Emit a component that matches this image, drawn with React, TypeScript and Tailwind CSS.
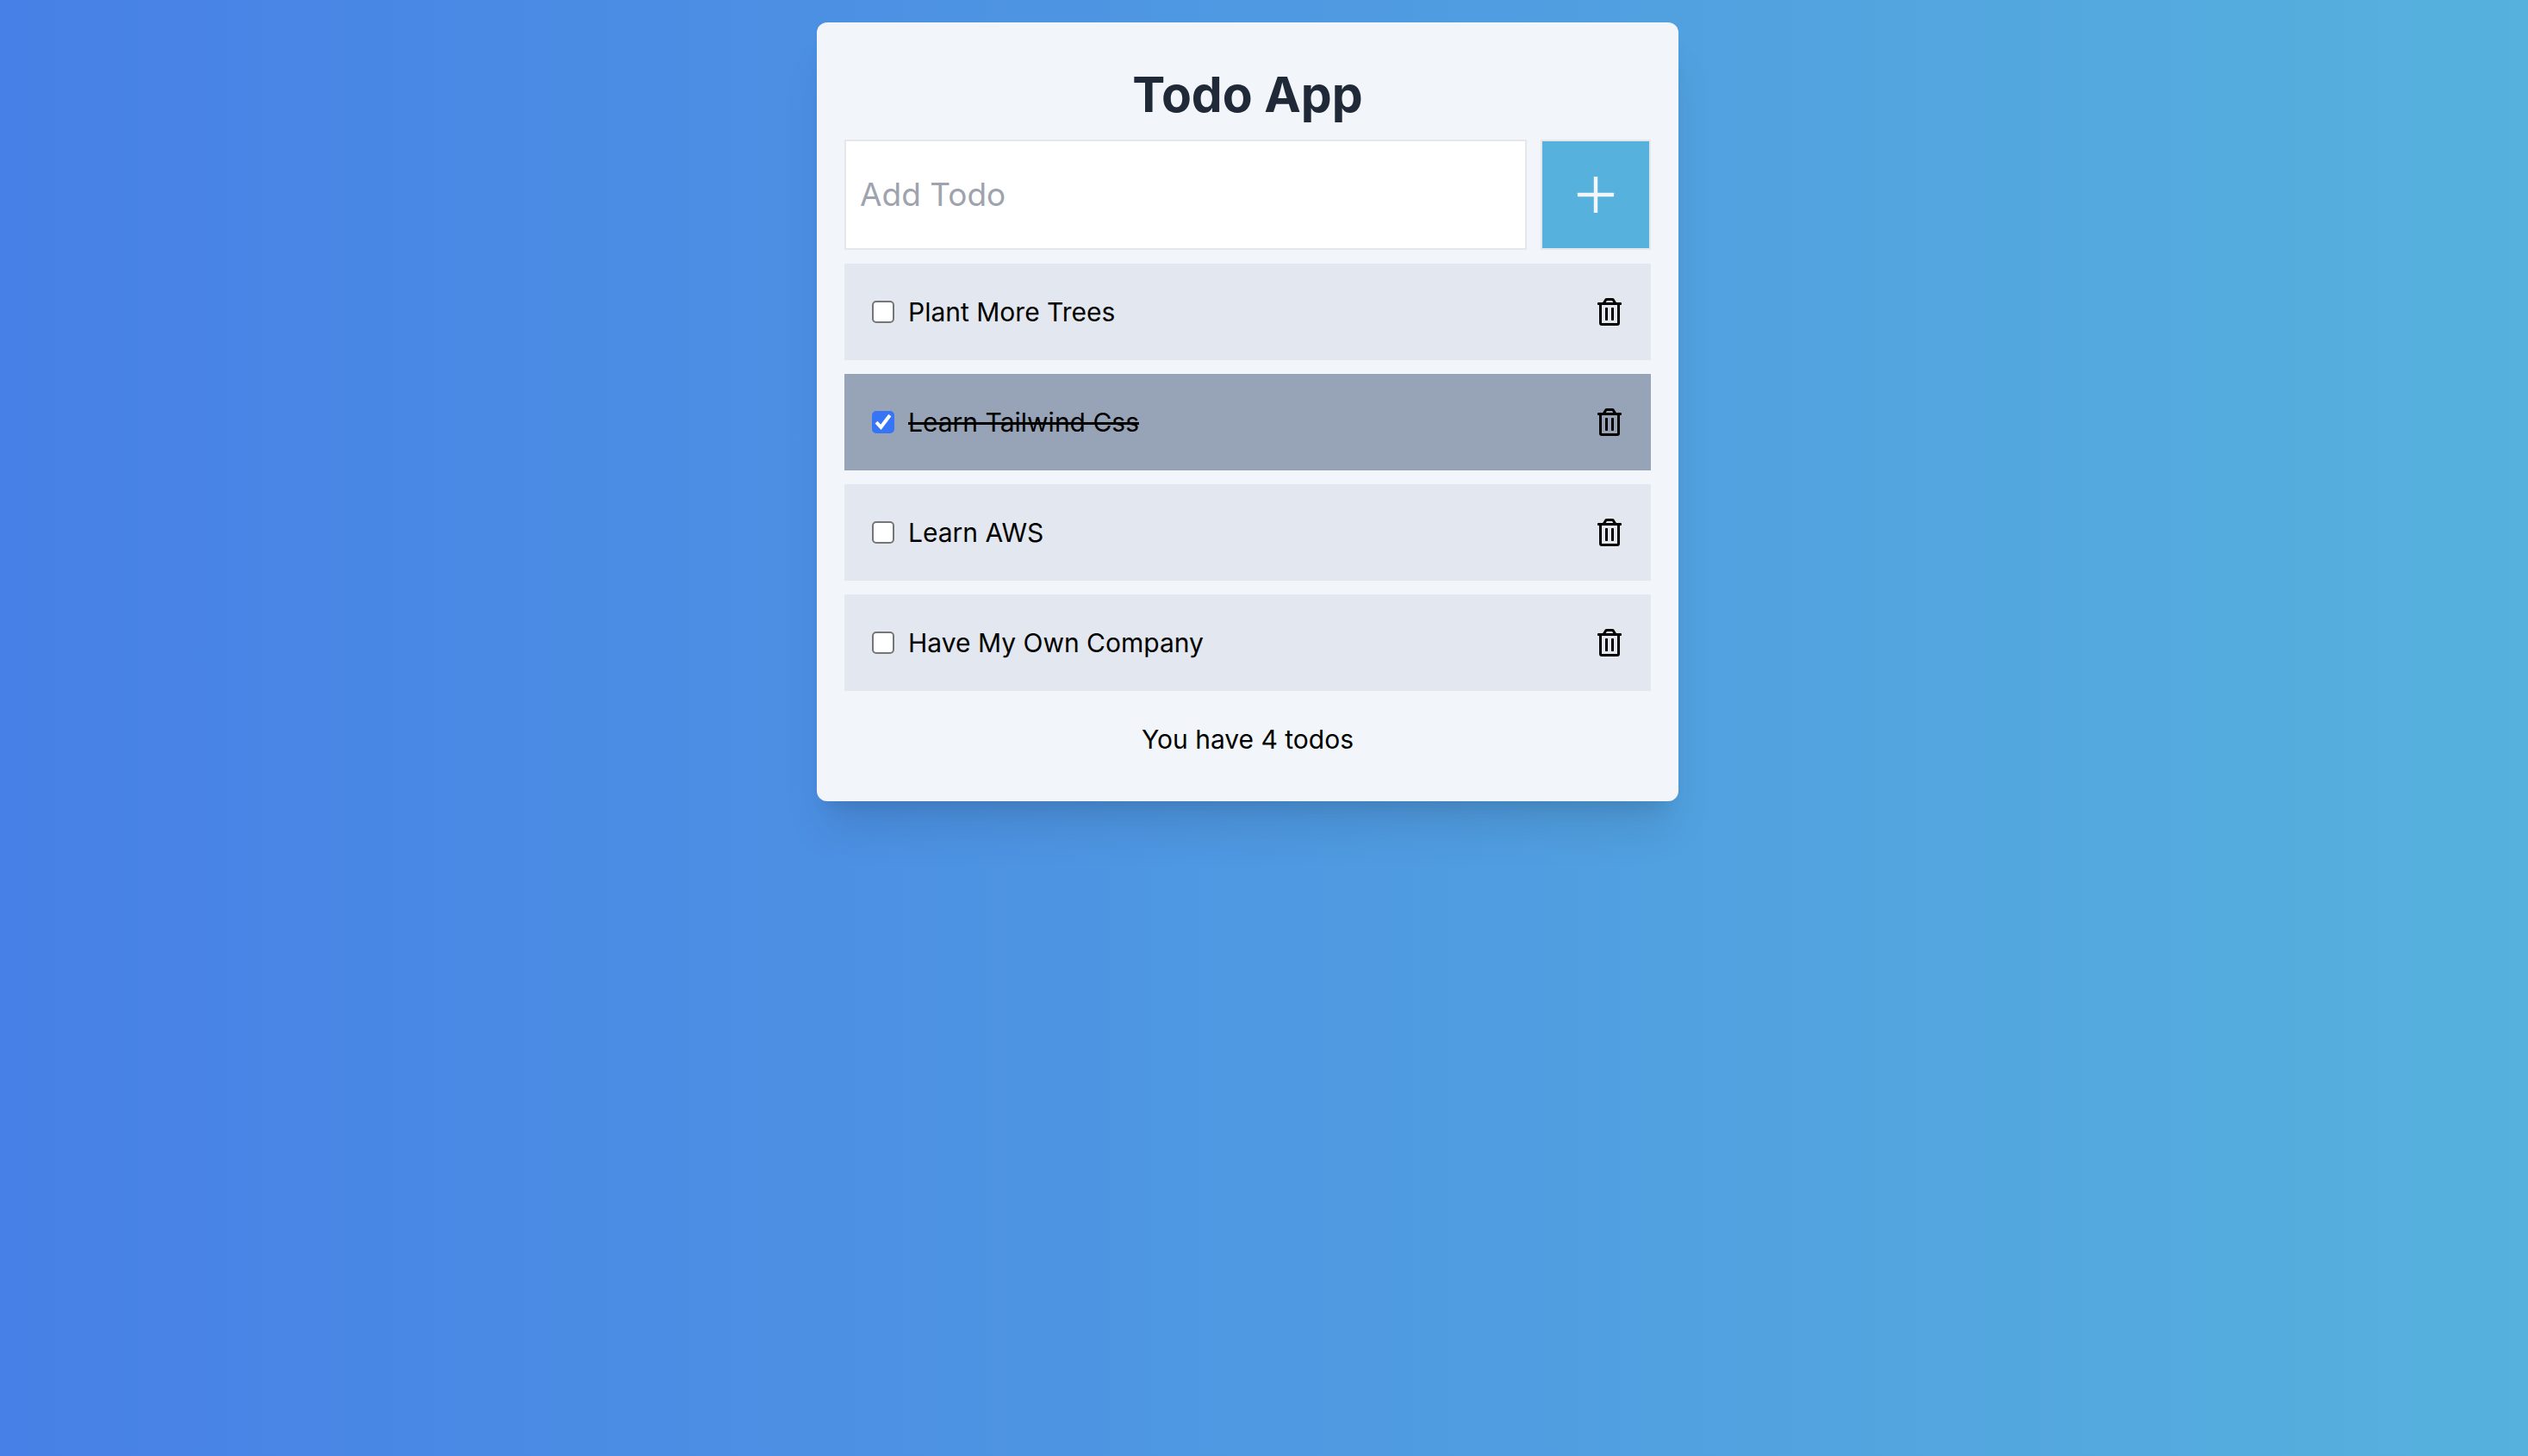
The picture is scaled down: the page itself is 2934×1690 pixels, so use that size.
import { useState } from "react";
import type { FormEvent } from "react";
import { AiOutlinePlus } from "react-icons/ai";
import { FaRegTrashAlt } from "react-icons/fa";

type Todo = { id: number; text: string; completed: boolean };

const initialTodos: Todo[] = [
  { id: 1, text: "Plant More Trees", completed: false },
  { id: 2, text: "Learn Tailwind Css", completed: true },
  { id: 3, text: "Learn AWS", completed: false },
  { id: 4, text: "Have My Own Company", completed: false },
];

type ItemProps = { todo: Todo; onToggle: () => void; onDelete: () => void };

function TodoItem({ todo, onToggle, onDelete }: ItemProps) {
  return (
    <li
      className={
        todo.completed
          ? "my-4 flex items-center justify-between bg-[#97a3b6] p-8"
          : "my-4 flex items-center justify-between bg-[#e3e7ef] p-8"
      }
    >
      <label className="flex cursor-pointer items-center gap-4">
        <span className="grid size-[26px]">
          <input
            type="checkbox"
            checked={todo.completed}
            onChange={onToggle}
            className="peer col-start-1 row-start-1 size-[26px] appearance-none rounded-[5px] border-2 border-[#767676] bg-white checked:border-[#3575f6] checked:bg-[#3575f6]"
          />
          <svg
            viewBox="0 0 26 26"
            fill="none"
            aria-hidden="true"
            className="pointer-events-none invisible col-start-1 row-start-1 size-[26px] stroke-white stroke-[4px] peer-checked:visible"
          >
            <path d="M5 13.2 L10.4 18.8 L20.8 5" />
          </svg>
        </span>
        <span className={todo.completed ? "line-through" : ""}>{todo.text}</span>
      </label>
      <button type="button" aria-label={`Delete ${todo.text}`} onClick={onDelete} className="cursor-pointer">
        <FaRegTrashAlt size={32} />
      </button>
    </li>
  );
}

export default function App() {
  const [todos, setTodos] = useState<Todo[]>(initialTodos);
  const [text, setText] = useState("");

  const addTodo = (e: FormEvent) => {
    e.preventDefault();
    if (!text.trim()) return;
    setTodos([...todos, { id: Date.now(), text, completed: false }]);
    setText("");
  };

  return (
    <div className="min-h-screen bg-linear-to-r/srgb from-[#4780e6] to-[#56b1dd] pt-[26px] pr-[70px] pb-8 pl-8 font-['Inter',sans-serif] text-[30px] leading-[48px] text-black">
      <main className="mx-auto w-full max-w-[1000px] rounded-xl bg-[#f2f5fa] p-8 shadow-[0_40px_50px_-10px_rgba(0,0,0,0.1),0_16px_20px_-12px_rgba(0,0,0,0.1)]">
        <h1 className="p-4 text-center text-[57px] leading-[72px] font-bold text-[#202937]">Todo App</h1>
        <form onSubmit={addTodo} className="flex justify-between gap-4">
          <input
            type="text"
            aria-label="Add Todo"
            placeholder="Add Todo"
            value={text}
            onChange={(e) => setText(e.target.value)}
            className="min-w-0 flex-1 border-2 border-[#e5e7eb] bg-white p-4 text-[37px] outline-none placeholder:text-[#9ea3ae]"
          />
          <button
            type="submit"
            aria-label="Add"
            className="cursor-pointer border-2 border-[#e5e7eb] bg-[#56b1dd] p-[32px] text-[#f2f5fa]"
          >
            <AiOutlinePlus size={60} />
          </button>
        </form>
        <ul>
          {todos.map((todo) => (
            <TodoItem
              key={todo.id}
              todo={todo}
              onToggle={() =>
                setTodos(todos.map((t) => (t.id === todo.id ? { ...t, completed: !t.completed } : t)))
              }
              onDelete={() => setTodos(todos.filter((t) => t.id !== todo.id))}
            />
          ))}
        </ul>
        {todos.length > 0 && <p className="p-4 text-center">{`You have ${todos.length} todos`}</p>}
      </main>
    </div>
  );
}
